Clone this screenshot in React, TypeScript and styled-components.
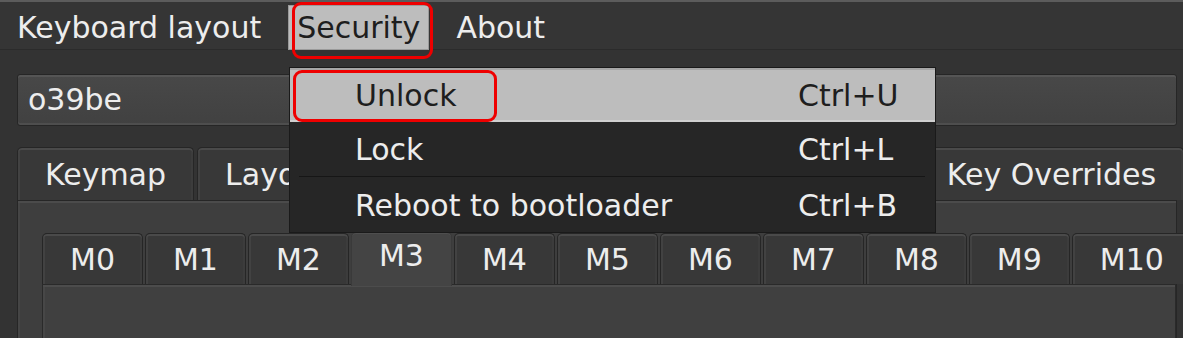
import React from "react";
import styled, { createGlobalStyle, css } from "styled-components";

const GlobalStyle = createGlobalStyle`
  html, body {
    margin: 0;
    padding: 0;
    background: #333333;
    overflow: hidden;
  }
  * { box-sizing: border-box; }
`;

const Window = styled.div`
  position: relative;
  width: 1183px;
  height: 338px;
  overflow: hidden;
  background: #333333;
  border-top: 2px solid #5c5c5c;
  font-family: "DejaVu Sans", "Liberation Sans", sans-serif;
  font-size: 30px;
  color: #ededed;
`;

const MenuBar = styled.div`
  display: flex;
  gap: 18px;
  height: 48px;
  padding-left: 8px;
  background: #353535;
  border-bottom: 1px solid #2b2b2b;
`;

const MenuItem = styled.div<{ $active?: boolean }>`
  margin-top: 3px;
  height: 45px;
  line-height: 43px;
  padding: 0 8px;
  white-space: nowrap;
  border: 1px solid transparent;
  ${(p) =>
    p.$active &&
    css`
      background: #bdbdbd;
      color: #1e1e1e;
      border-color: #9a9a9a;
    `}
`;

const Content = styled.div`
  display: flex;
  flex-direction: column;
  padding: 24px 6px 0 17px;
`;

const Combo = styled.div`
  height: 52px;
  border: 1px solid #262626;
  border-radius: 3px;
  background: linear-gradient(#484848, #414141);
  box-shadow: inset 0 2px 0 #555555, inset 0 -2px 0 #4e4e4e;
  padding-left: 10px;
  line-height: 50px;
`;

const TabBar = styled.div<{ $gap: number }>`
  display: flex;
  gap: ${(p) => p.$gap}px;
  align-items: flex-end;
  white-space: nowrap;
`;

const Tab = styled.div<{ $selected?: boolean; $h: number }>`
  flex: none;
  height: ${(p) => p.$h}px;
  padding: 0 27px;
  display: flex;
  align-items: center;
  border: 1px solid #262626;
  border-bottom: none;
  border-radius: 5px 5px 0 0;
  background: #383838;
  box-shadow: inset 0 2px 0 #4a4a4a, inset 2px 0 0 #424242, inset -2px 0 0 #3c3c3c;
  ${(p) =>
    p.$selected &&
    css`
      height: ${p.$h + 3}px;
      margin-bottom: -2px;
      padding-bottom: 8px;
      background: #444444;
      border-color: #3a3a3a;
      box-shadow: inset 0 1px 0 #4e4e4e;
      position: relative;
      z-index: 1;
    `}
`;

const OuterTabs = styled.div`
  margin-top: 21px;
  display: flex;
  flex-direction: column;
`;

const Pane = styled.div`
  height: 200px;
  border: 1px solid #262626;
  background: #3e3e3e;
  box-shadow: inset 0 2px 0 #4b4b4b, inset 2px 0 0 #454545;
  padding: 31px 0 0 24px;
  display: flex;
  flex-direction: column;
`;

const InnerPane = styled.div`
  height: 80px;
  border: 1px solid #2a2a2a;
  background: #404040;
  box-shadow: inset 0 2px 0 #4c4c4c, inset 2px 0 0 #474747;
`;

const Popup = styled.div`
  position: absolute;
  left: 289px;
  top: 65px;
  width: 647px;
  background: #262626;
  border: 1px solid #1a1a1a;
  display: flex;
  flex-direction: column;
  z-index: 5;
`;

const PopupItem = styled.div<{ $active?: boolean }>`
  height: 54px;
  display: grid;
  grid-template-columns: 1fr 137px;
  align-items: center;
  padding-left: 65px;
  white-space: nowrap;
  ${(p) =>
    p.$active &&
    css`
      background: #bdbdbd;
      color: #1e1e1e;
      box-shadow: inset 0 2px 0 #a6a6a6, inset 0 -2px 0 #cfcfcf;
    `}
`;

const Separator = styled.div`
  height: 1px;
  margin: 0 10px 1px 9px;
  background: #161616;
`;

const Annotation = styled.div<{ $x: number; $y: number; $w: number; $h: number }>`
  position: absolute;
  left: ${(p) => p.$x}px;
  top: ${(p) => p.$y}px;
  width: ${(p) => p.$w}px;
  height: ${(p) => p.$h}px;
  border: 3px solid #ee0000;
  border-radius: 9px;
  z-index: 10;
  pointer-events: none;
`;

const outerTabs = ["Keymap", "Layout", "Macros", "Tap Dance", "Combos", "Key Overrides"];
const innerTabs = ["M0", "M1", "M2", "M3", "M4", "M5", "M6", "M7", "M8", "M9", "M10"];

export default function App() {
  return (
    <>
      <GlobalStyle />
      <Window>
        <MenuBar>
          <MenuItem>Keyboard layout</MenuItem>
          <MenuItem $active>Security</MenuItem>
          <MenuItem>About</MenuItem>
        </MenuBar>
        <Content>
          <Combo>o39be</Combo>
          <OuterTabs>
            <TabBar $gap={3}>
              {outerTabs.map((t) => (
                <Tab key={t} $h={53}>
                  {t}
                </Tab>
              ))}
            </TabBar>
            <Pane>
              <TabBar $gap={2}>
                {innerTabs.map((t) => (
                  <Tab key={t} $h={51} $selected={t === "M3"}>
                    {t}
                  </Tab>
                ))}
              </TabBar>
              <InnerPane />
            </Pane>
          </OuterTabs>
        </Content>
        <Popup>
          <PopupItem $active>
            <span>Unlock</span>
            <span>Ctrl+U</span>
          </PopupItem>
          <PopupItem>
            <span>Lock</span>
            <span>Ctrl+L</span>
          </PopupItem>
          <Separator />
          <PopupItem>
            <span>Reboot to bootloader</span>
            <span>Ctrl+B</span>
          </PopupItem>
        </Popup>
        <Annotation $x={292} $y={0} $w={141} $h={57} />
        <Annotation $x={293} $y={68} $w={204} $h={52} />
      </Window>
    </>
  );
}
